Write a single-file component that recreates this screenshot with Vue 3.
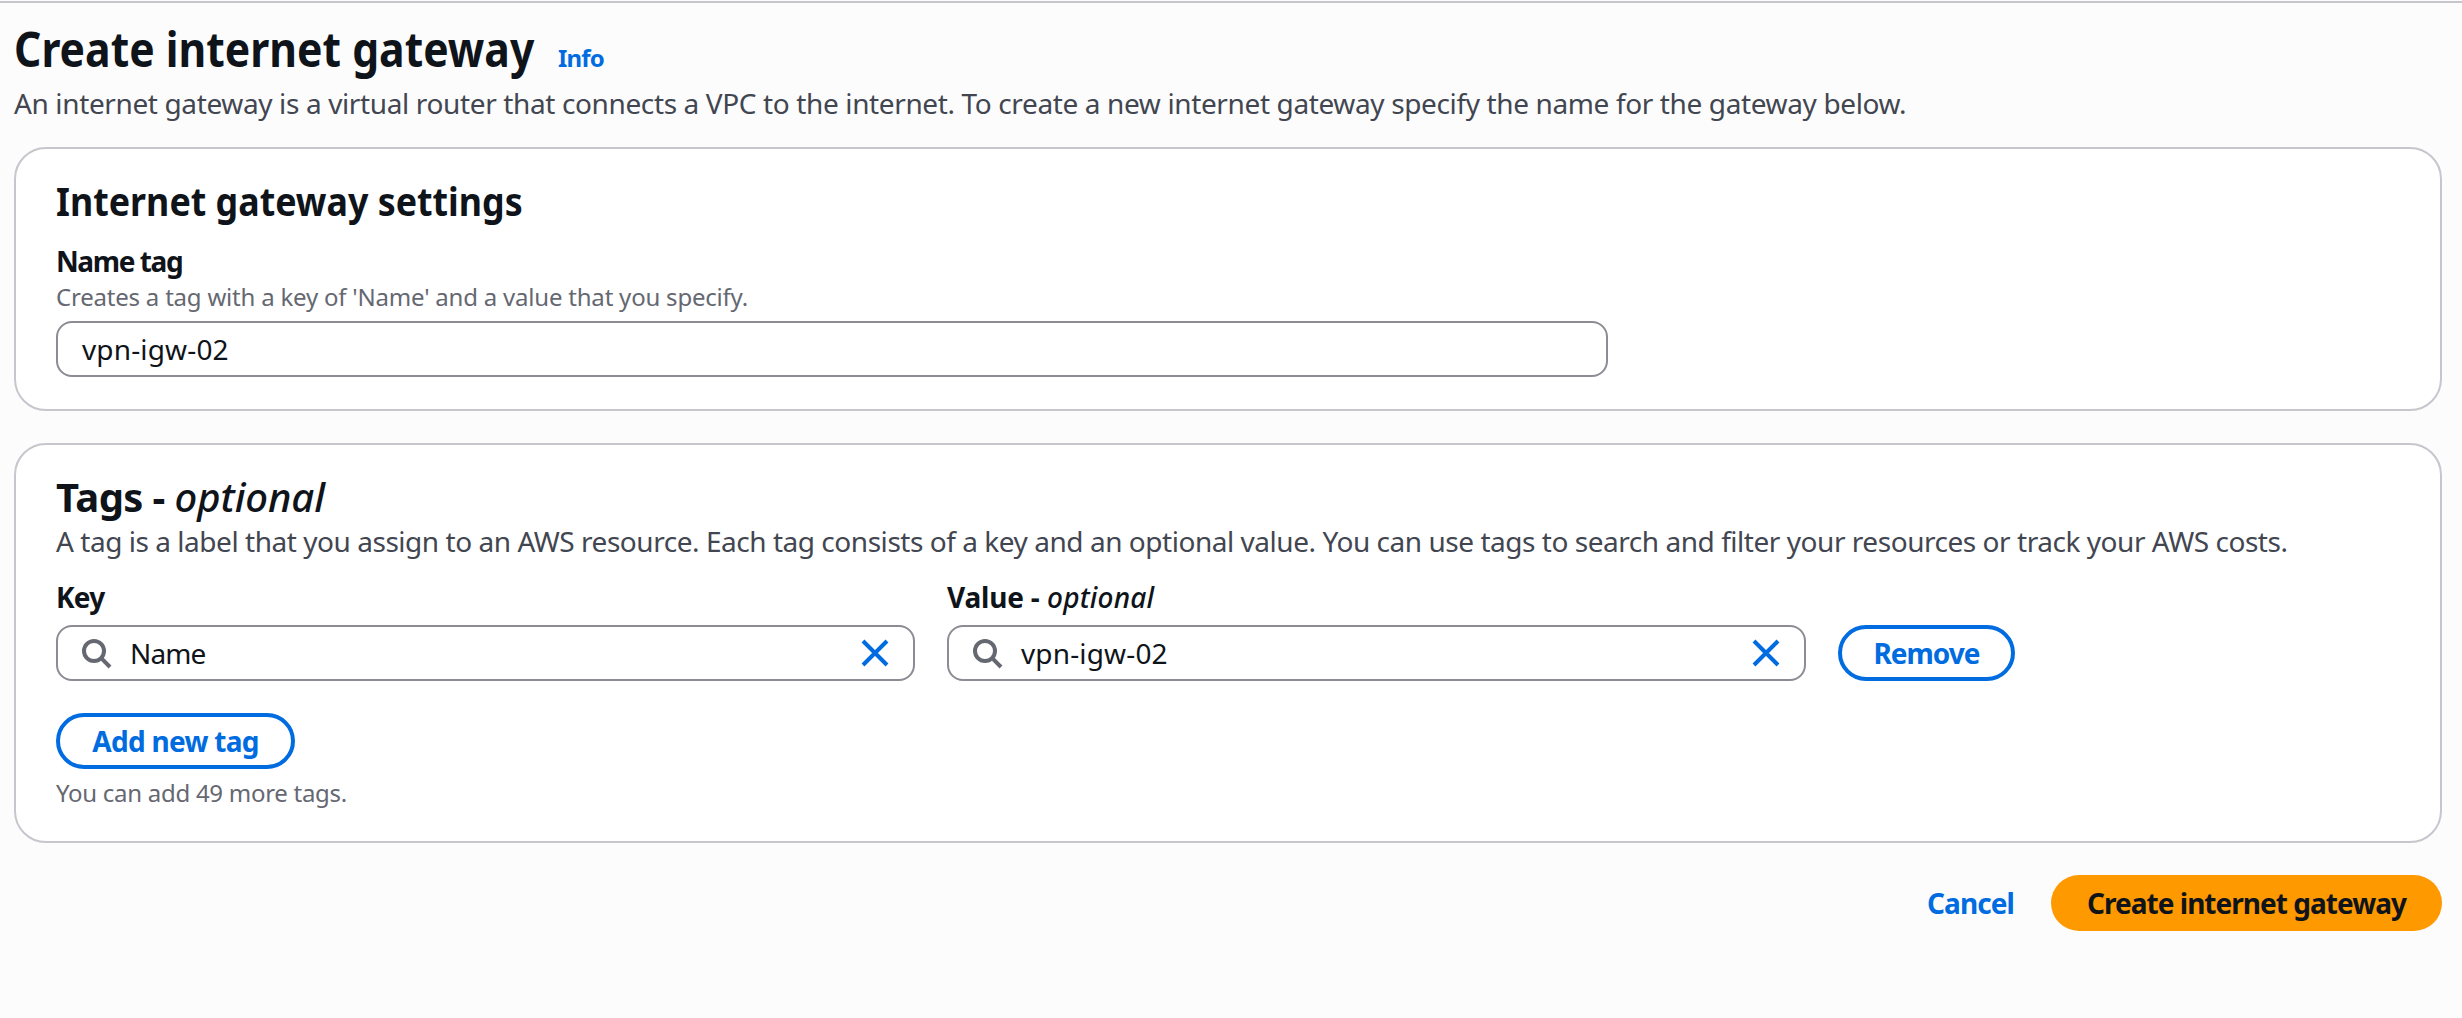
<script setup>
import { ref } from 'vue'

const nameTag = ref('vpn-igw-02')
const fields = ref([
  { id: 'key', label: 'Key', optional: false, value: 'Name' },
  { id: 'value', label: 'Value -', optional: true, value: 'vpn-igw-02' },
])
</script>

<template>
  <main class="page">
    <header class="page-header">
      <div class="title-row">
        <h1><span class="narrow">Create internet gateway</span></h1>
        <a class="info">Info</a>
      </div>
      <p class="description intro">An internet gateway is a virtual router that connects a VPC to the internet. To create a new internet gateway specify the name for the gateway below.</p>
    </header>

    <section class="card">
      <h2 class="settings-title"><span class="narrow">Internet gateway settings</span></h2>
      <label class="label name-label">Name tag</label>
      <p class="hint">Creates a tag with a key of 'Name' and a value that you specify.</p>
      <div class="input name-input"><span class="name-value">{{ nameTag }}</span></div>
    </section>

    <section class="card">
      <h2 class="tags-title">Tags - <em>optional</em></h2>
      <p class="description tags-desc">A tag is a label that you assign to an AWS resource. Each tag consists of a key and an optional value. You can use tags to search and filter your resources or track your AWS costs.</p>
      <div class="tag-row">
        <div v-for="f in fields" :key="f.id" class="field">
          <label class="label" :class="f.id + '-label'">{{ f.label }}<em v-if="f.optional"> optional</em></label>
          <div class="input search-input">
            <svg class="icon search" viewBox="0 0 16 16"><circle cx="7" cy="7" r="5" /><path d="M10.6 10.6 15 15" /></svg>
            <span class="text" :class="f.id + '-text'">{{ f.value }}</span>
            <svg class="icon clear" viewBox="0 0 16 16"><path d="m2 2 12 12M14 2 2 14" /></svg>
          </div>
        </div>
        <button class="btn outline remove">Remove</button>
      </div>
      <button class="btn outline add">Add new tag</button>
      <p class="hint left-count">You can add 49 more tags.</p>
    </section>

    <footer class="actions">
      <button class="btn cancel">Cancel</button>
      <button class="btn primary">Create internet gateway</button>
    </footer>
  </main>
</template>

<style>
body {
  background: #fcfcfd;
}
</style>

<style scoped>
.page {
  box-sizing: border-box;
  min-height: 1017px;
  margin-top: 1px;
  padding: 16px 20px 0 14px;
  border-top: 2px solid #c6c6cd;
  font-family: "Noto Sans", sans-serif;
  font-size: 28px;
  line-height: 40px;
  color: #0f141a;
  white-space: nowrap;
}
h1, h2, p {
  margin: 0;
}
.title-row {
  display: flex;
  align-items: baseline;
  height: 60px;
  margin-bottom: 4px;
}
h1 {
  width: 544px;
  font-size: 48px;
  line-height: 60px;
}
.narrow {
  display: inline-block;
  transform-origin: 0 50%;
  transform: scaleX(0.889);
}
.settings-title .narrow {
  transform: scaleX(0.895);
}
.info {
  font-size: 24px;
  font-weight: 700;
  letter-spacing: -0.8px;
  color: #006ce0;
}
.description {
  color: #424650;
}
.intro {
  letter-spacing: -0.37px;
}
.tags-desc {
  letter-spacing: -0.46px;
}
.card {
  box-sizing: border-box;
  margin-top: 24px;
  padding: 28px 40px 32px;
  border: 2px solid #c6c6cd;
  border-radius: 32px;
  background: #fff;
}
.card + .card {
  margin-top: 32px;
}
h2 {
  font-size: 40px;
  line-height: 48px;
}
.settings-title {
  margin-bottom: 16px;
}
.tags-title {
  letter-spacing: -0.6px;
}
em {
  font-weight: 500;
}
.tags-title em {
  letter-spacing: -0.1px;
}
.label {
  display: block;
  font-weight: 700;
  white-space: pre;
}
.name-label {
  letter-spacing: -1.4px;
}
.key-label {
  letter-spacing: -0.8px;
}
.value-label {
  letter-spacing: -0.2px;
}
.value-label em {
  letter-spacing: 0.2px;
}
.hint {
  font-size: 24px;
  line-height: 32px;
  letter-spacing: -0.21px;
  color: #656871;
}
.input {
  box-sizing: border-box;
  display: flex;
  align-items: center;
  height: 56px;
  margin-top: 8px;
  border: 2px solid #8c8c94;
  border-radius: 16px;
  background: #fff;
}
.name-input {
  width: 1552px;
  padding-left: 24px;
}
.name-value, .value-text {
  letter-spacing: 0.15px;
}
.key-text {
  letter-spacing: -0.9px;
}
.tag-row {
  display: flex;
  align-items: flex-end;
  gap: 32px;
  margin: 16px 0 32px;
}
.field {
  width: 859px;
}
.search-input {
  padding: 0 22px;
}
.text {
  flex: 1;
  padding-left: 18px;
}
.icon {
  width: 32px;
  height: 32px;
  fill: none;
  stroke-width: 2;
}
.search {
  stroke: #656871;
}
.clear {
  stroke: #006ce0;
}
.btn {
  box-sizing: border-box;
  display: block;
  height: 56px;
  padding: 0;
  border: 0;
  border-radius: 40px;
  background: transparent;
  font: 700 28px/48px "Noto Sans", sans-serif;
  color: #006ce0;
}
.outline {
  border: 4px solid #006ce0;
}
.remove {
  width: 177px;
  letter-spacing: -1px;
}
.add {
  width: 239px;
  letter-spacing: -0.7px;
}
.left-count {
  margin-top: 8px;
  letter-spacing: -0.28px;
}
.actions {
  display: flex;
  justify-content: flex-end;
  gap: 37px;
  margin-top: 32px;
}
.cancel {
  letter-spacing: -0.9px;
}
.primary {
  width: 391px;
  background: #ff9900;
  letter-spacing: -0.97px;
  color: #0f141a;
}
</style>
